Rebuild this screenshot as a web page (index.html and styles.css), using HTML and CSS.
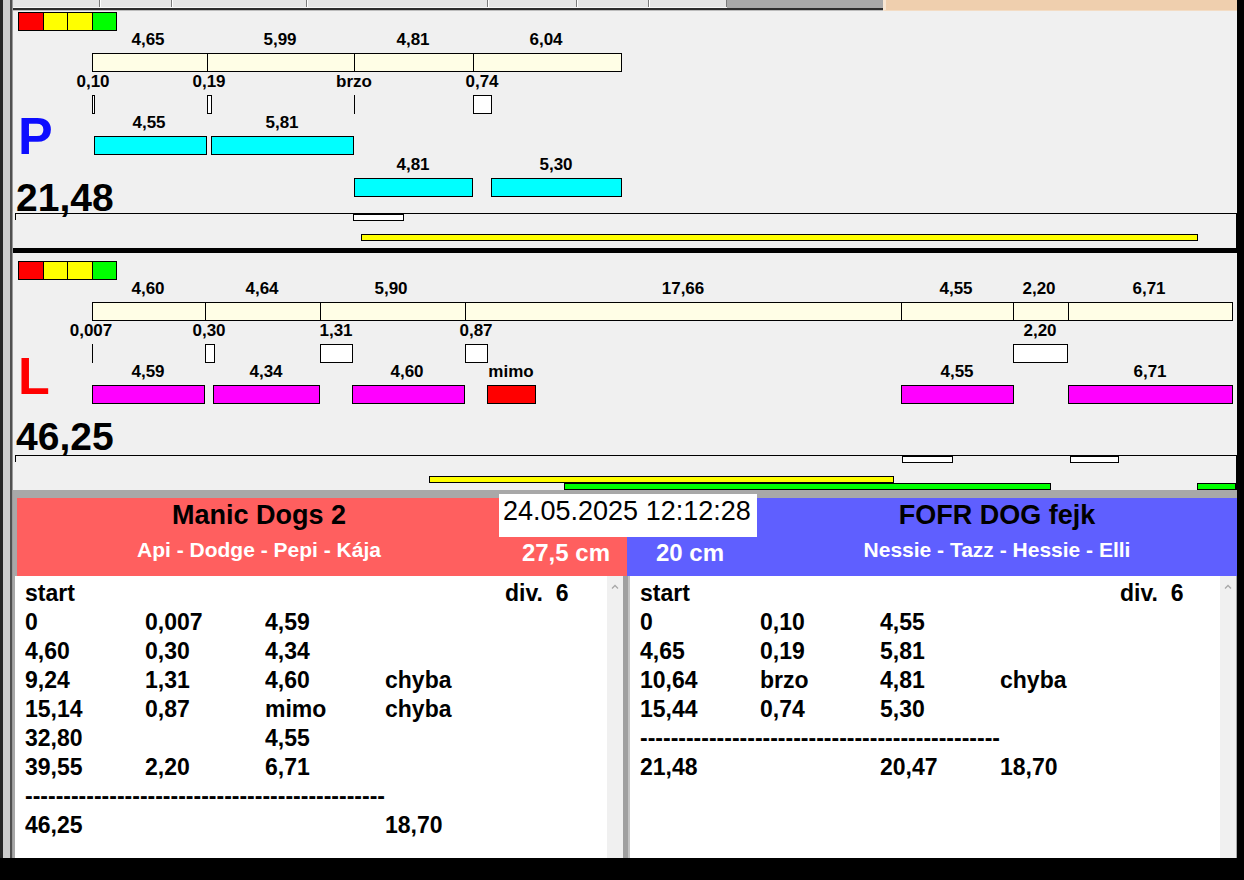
FILE: index.html
```html
<!DOCTYPE html>
<html>
<head>
<meta charset="utf-8">
<link rel="stylesheet" href="styles.css">
</head>
<body>
<div class="app">
  <div class="rail"></div>
  <div class="main">
    <div class="tabs">
      <div class="tabrow">
        <div class="tab" style="width:87px"></div>
        <div class="tab" style="width:72px"></div>
        <div class="tab" style="width:135px"></div>
        <div class="tab" style="width:181px"></div>
        <div class="tab" style="width:89px"></div>
        <div class="tab" style="width:72px"></div>
        <div class="tab" style="width:78px"></div>
        <div class="tab tab-dark" style="width:156px"></div>
      </div>
      <div class="peach"></div>
    </div>

    <!-- P panel -->
    <div class="panel">
      <div class="lights" style="top:1px"><span class="l-red"></span><span class="l-yel"></span><span class="l-yel"></span><span class="l-grn"></span></div>

      <div class="lbl" style="left:135px;top:19px">4,65</div>
      <div class="lbl" style="left:267px;top:19px">5,99</div>
      <div class="lbl" style="left:400px;top:19px">4,81</div>
      <div class="lbl" style="left:533px;top:19px">6,04</div>

      <div class="bar cream" style="left:79px;top:42px;width:116px"></div>
      <div class="bar cream" style="left:194px;top:42px;width:148px"></div>
      <div class="bar cream" style="left:341px;top:42px;width:120px"></div>
      <div class="bar cream" style="left:460px;top:42px;width:149px"></div>

      <div class="lbl" style="left:80px;top:61px">0,10</div>
      <div class="lbl" style="left:196px;top:61px">0,19</div>
      <div class="lbl" style="left:341px;top:61px">brzo</div>
      <div class="lbl" style="left:469px;top:61px">0,74</div>

      <div class="bar white" style="left:79px;top:84px;width:3px"></div>
      <div class="bar white" style="left:194px;top:84px;width:5px"></div>
      <div class="bar vline" style="left:341px;top:84px"></div>
      <div class="bar white" style="left:460px;top:84px;width:19px"></div>

      <div class="big big-p">P</div>

      <div class="lbl" style="left:136px;top:102px">4,55</div>
      <div class="lbl" style="left:269px;top:102px">5,81</div>
      <div class="bar cyan" style="left:81px;top:125px;width:113px"></div>
      <div class="bar cyan" style="left:198px;top:125px;width:143px"></div>

      <div class="lbl" style="left:400px;top:144px">4,81</div>
      <div class="lbl" style="left:543px;top:144px">5,30</div>
      <div class="bar cyan" style="left:341px;top:167px;width:119px"></div>
      <div class="bar cyan" style="left:478px;top:167px;width:131px"></div>

      <div class="total" style="top:167px">21,48</div>

      <div class="track"></div>
      <div class="tick"></div>
      <div class="bar thin white" style="left:340px;top:203px;width:51px"></div>
      <div class="bar thin yel" style="left:348px;top:223px;width:837px"></div>
    </div>

    <div class="sep-black"></div>

    <!-- L panel -->
    <div class="panel">
      <div class="lights" style="top:8px"><span class="l-red"></span><span class="l-yel"></span><span class="l-yel"></span><span class="l-grn"></span></div>

      <div class="lbl" style="left:135px;top:26px">4,60</div>
      <div class="lbl" style="left:249px;top:26px">4,64</div>
      <div class="lbl" style="left:378px;top:26px">5,90</div>
      <div class="lbl" style="left:670px;top:26px">17,66</div>
      <div class="lbl" style="left:943px;top:26px">4,55</div>
      <div class="lbl" style="left:1026px;top:26px">2,20</div>
      <div class="lbl" style="left:1136px;top:26px">6,71</div>

      <div class="bar cream" style="left:79px;top:49px;width:114px"></div>
      <div class="bar cream" style="left:192px;top:49px;width:116px"></div>
      <div class="bar cream" style="left:307px;top:49px;width:146px"></div>
      <div class="bar cream" style="left:452px;top:49px;width:437px"></div>
      <div class="bar cream" style="left:888px;top:49px;width:113px"></div>
      <div class="bar cream" style="left:1000px;top:49px;width:56px"></div>
      <div class="bar cream" style="left:1055px;top:49px;width:165px"></div>

      <div class="lbl" style="left:78px;top:68px">0,007</div>
      <div class="lbl" style="left:196px;top:68px">0,30</div>
      <div class="lbl" style="left:323px;top:68px">1,31</div>
      <div class="lbl" style="left:463px;top:68px">0,87</div>
      <div class="lbl" style="left:1027px;top:68px">2,20</div>

      <div class="bar vline" style="left:79px;top:91px"></div>
      <div class="bar white" style="left:192px;top:91px;width:10px"></div>
      <div class="bar white" style="left:307px;top:91px;width:33px"></div>
      <div class="bar white" style="left:452px;top:91px;width:23px"></div>
      <div class="bar white" style="left:1000px;top:91px;width:55px"></div>

      <div class="big big-l">L</div>

      <div class="lbl" style="left:135px;top:109px">4,59</div>
      <div class="lbl" style="left:253px;top:109px">4,34</div>
      <div class="lbl" style="left:394px;top:109px">4,60</div>
      <div class="lbl" style="left:498px;top:109px">mimo</div>
      <div class="lbl" style="left:944px;top:109px">4,55</div>
      <div class="lbl" style="left:1137px;top:109px">6,71</div>

      <div class="bar mag" style="left:79px;top:132px;width:113px"></div>
      <div class="bar mag" style="left:200px;top:132px;width:107px"></div>
      <div class="bar mag" style="left:339px;top:132px;width:113px"></div>
      <div class="bar red" style="left:474px;top:132px;width:49px"></div>
      <div class="bar mag" style="left:888px;top:132px;width:113px"></div>
      <div class="bar mag" style="left:1055px;top:132px;width:165px"></div>

      <div class="total" style="top:164px">46,25</div>

      <div class="track"></div>
      <div class="tick"></div>
      <div class="bar thin white" style="left:889px;top:203px;width:51px"></div>
      <div class="bar thin white" style="left:1057px;top:203px;width:49px"></div>
      <div class="bar thin yel" style="left:416px;top:223px;width:465px"></div>
      <div class="bar thin grn" style="left:551px;top:230px;width:487px"></div>
      <div class="bar thin grn" style="left:1184px;top:230px;width:39px"></div>
    </div>

    <div class="sep-gray"></div>

    <div class="heads">
      <div class="head head-l">
        <div class="names">
          <div class="team">Manic Dogs 2</div>
          <div class="members">Api - Dodge - Pepi - Kája</div>
        </div>
        <div class="cm cm-l">27,5 cm</div>
      </div>
      <div class="head head-r">
        <div class="cm cm-r">20 cm</div>
        <div class="names">
          <div class="team">FOFR DOG fejk</div>
          <div class="members">Nessie - Tazz - Hessie - Elli</div>
        </div>
      </div>
    </div>

    <div class="lists">
      <div class="list list-l">
        <div class="rows">
          <span>start</span><span></span><span></span><span></span><span>div.&nbsp; 6</span>
          <span>0</span><span>0,007</span><span>4,59</span><span></span><span></span>
          <span>4,60</span><span>0,30</span><span>4,34</span><span></span><span></span>
          <span>9,24</span><span>1,31</span><span>4,60</span><span>chyba</span><span></span>
          <span>15,14</span><span>0,87</span><span>mimo</span><span>chyba</span><span></span>
          <span>32,80</span><span></span><span>4,55</span><span></span><span></span>
          <span>39,55</span><span>2,20</span><span>6,71</span><span></span><span></span>
          <span class="dash">-----------------------------------------------</span>
          <span>46,25</span><span></span><span></span><span>18,70</span><span></span>
        </div>
        <div class="scroll"><svg class="caret" width="8" height="5" viewBox="0 0 8 5"><polyline points="1,4.5 4,1.5 7,4.5" fill="none" stroke="#a8a8a8" stroke-width="1.3"/></svg></div>
      </div>
      <div class="list list-r">
        <div class="rows">
          <span>start</span><span></span><span></span><span></span><span>div.&nbsp; 6</span>
          <span>0</span><span>0,10</span><span>4,55</span><span></span><span></span>
          <span>4,65</span><span>0,19</span><span>5,81</span><span></span><span></span>
          <span>10,64</span><span>brzo</span><span>4,81</span><span>chyba</span><span></span>
          <span>15,44</span><span>0,74</span><span>5,30</span><span></span><span></span>
          <span class="dash">-----------------------------------------------</span>
          <span>21,48</span><span></span><span>20,47</span><span>18,70</span><span></span>
        </div>
        <div class="scroll"><svg class="caret" width="8" height="5" viewBox="0 0 8 5"><polyline points="1,4.5 4,1.5 7,4.5" fill="none" stroke="#a8a8a8" stroke-width="1.3"/></svg></div>
      </div>
    </div>

    <div class="date">24.05.2025 12:12:28</div>
  </div>
</div>
</body>
</html>
```

FILE: styles.css
```css
html, body {
  margin: 0;
  padding: 0;
  background: #000;
  font-family: "Liberation Sans", Arial, sans-serif;
}

.app {
  display: flex;
  width: 1237px;
  height: 858px;
}

.rail {
  width: 13px;
  flex: none;
  background: linear-gradient(to right, #262626 0 3px, #cdcdcd 3px 10px, #505050 10px 12px, #9a9a9a 12px 13px);
}

.main {
  position: relative;
  width: 1224px;
  display: flex;
  flex-direction: column;
  background: #f0f0f0;
}

/* tab strip */
.tabs {
  height: 11px;
  display: flex;
}
.tabrow {
  width: 870px;
  height: 11px;
  display: flex;
  align-items: flex-start;
  background: linear-gradient(#e6e6e6 0 7px, #f7f7f7 7px 8px, #2e2e2e 8px 10px, #bcbcbc 10px 11px);
}
.tab {
  height: 7px;
  box-sizing: border-box;
  border-right: 1px solid #7a7a7a;
  box-shadow: 1px 0 0 #ffffff;
}
.tab-dark {
  height: 8px;
  background: #a9a9a9;
  border-right: none;
  box-shadow: none;
}
.peach {
  flex: 1;
  height: 11px;
  box-sizing: border-box;
  background: #efcfae;
  border-left: 3px solid #f8e6d2;
  border-bottom: 1px solid #f3dcc4;
}

/* diagram panels */
.panel {
  position: relative;
  height: 237px;
  background: #f0f0f0;
  overflow: hidden;
}
.sep-black {
  height: 5px;
  background: #000;
}
.sep-gray {
  height: 8px;
  background: #a8a8a8;
}

.lights {
  position: absolute;
  left: 5px;
  display: flex;
  height: 19px;
}
.lights span {
  width: 25.5px;
  height: 19px;
  box-sizing: border-box;
  border: 1px solid #000;
  margin-right: -1px;
}
.l-red { background: #ff0000; }
.l-yel { background: #ffff00; }
.l-grn { background: #00ff00; }

.lbl {
  position: absolute;
  transform: translateX(-50%);
  font-weight: bold;
  font-size: 17px;
  line-height: 20px;
  white-space: nowrap;
  color: #000;
}

.bar {
  position: absolute;
  box-sizing: border-box;
  border: 1px solid #000;
  height: 19px;
}
.bar.thin { height: 7px; }
.bar.vline {
  width: 1px;
  border: none;
  background: #000;
}
.cream { background: #fffee6; }
.cyan { background: #00ffff; }
.mag { background: #ff00ff; }
.red { background: #ff0000; }
.white { background: #ffffff; }
.yel { background: #ffff00; }
.grn { background: #00ff00; }

.big {
  position: absolute;
  left: 5px;
  font-weight: bold;
  font-size: 52px;
  line-height: 52px;
}
.big-p { top: 99px; color: #0d0dff; }
.big-l { top: 97px; color: #ff0000; }

.total {
  position: absolute;
  left: 3px;
  font-weight: bold;
  font-size: 39px;
  line-height: 39px;
  color: #000;
}

.track {
  position: absolute;
  left: 2px;
  top: 202px;
  width: 1222px;
  height: 35px;
  box-sizing: border-box;
  border-top: 1px solid #000;
  border-right: 1px solid #000;
}
.tick {
  position: absolute;
  left: 2px;
  top: 202px;
  width: 1px;
  height: 7px;
  background: #000;
}

/* team headers */
.heads {
  display: flex;
  height: 78px;
  padding-left: 4px;
  background: #a8a8a8;
}
.head {
  width: 610px;
  display: grid;
  color: #000;
}
.head-l {
  background: #ff5f5f;
  grid-template-columns: 484px 1fr;
}
.head-r {
  background: #5f5fff;
  grid-template-columns: 130px 1fr;
}
.names {
  padding-top: 1px;
  text-align: center;
}
.team {
  font-weight: bold;
  font-size: 27px;
  line-height: 32px;
}
.members {
  margin-top: 7px;
  font-weight: bold;
  font-size: 21px;
  line-height: 24px;
  color: #fff;
}
.cm {
  padding-top: 41px;
  font-weight: bold;
  font-size: 24px;
  line-height: 28px;
  color: #fff;
  white-space: nowrap;
}
.cm-l {
  text-align: right;
  padding-right: 17px;
}
.cm-r {
  padding-left: 29px;
}

/* lists */
.lists {
  display: flex;
  height: 282px;
  padding-left: 2px;
  background: linear-gradient(to right, #a8a8a8 0 610px, #a0a0a0 610px 615px, #c4c4c4 615px 617px, #a8a8a8 617px);
}
.list {
  display: flex;
  background: #fff;
}
.list-l { width: 608px; }
.list-r { width: 606px; margin-left: 7px; }

.rows {
  flex: 1;
  min-width: 0;
  overflow: hidden;
  padding: 3px 0 0 10px;
  display: grid;
  grid-template-columns: repeat(4, 120px) 1fr;
  grid-auto-rows: 29px;
  align-content: start;
  font-weight: bold;
  font-size: 23px;
  line-height: 29px;
  color: #000;
  white-space: nowrap;
}
.rows .dash {
  grid-column: 1 / -1;
}

.scroll {
  width: 16px;
  flex: none;
  background: #f0f0f0;
  display: flex;
  justify-content: center;
  align-items: flex-start;
  padding-top: 8px;
  box-sizing: border-box;
}
.caret {
  display: block;
}

/* date overlay */
.date {
  position: absolute;
  left: 486px;
  top: 494px;
  width: 258px;
  height: 43px;
  box-sizing: border-box;
  padding: 2px 0 0 4px;
  background: #fff;
  font-size: 27px;
  line-height: 31px;
  color: #000;
  white-space: nowrap;
}
```
